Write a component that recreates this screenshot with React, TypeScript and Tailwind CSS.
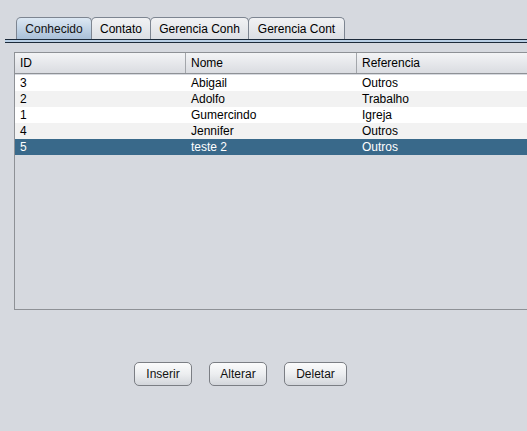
import React from 'react';

const rows = [
  { id: '3', nome: 'Abigail', ref: 'Outros' },
  { id: '2', nome: 'Adolfo', ref: 'Trabalho' },
  { id: '1', nome: 'Gumercindo', ref: 'Igreja' },
  { id: '4', nome: 'Jennifer', ref: 'Outros' },
  { id: '5', nome: 'teste 2', ref: 'Outros' },
];

const tabs = [
  { label: 'Conhecido', w: 'w-[76px]' },
  { label: 'Contato', w: 'w-[60px]' },
  { label: 'Gerencia Conh', w: 'w-[99px]' },
  { label: 'Gerencia Cont', w: 'w-[97px]' },
];

const App: React.FC = () => {
  return (
    <div className="w-[527px] h-[431px] overflow-hidden bg-[#d6d9df] text-[12px] text-black font-['Liberation_Sans',Arial,sans-serif] pt-[17px]">
      {/* Tabs */}
      <div className="flex pl-[16px] h-[22px]">
        {tabs.map((t, i) => (
          <div
            key={t.label}
            className={`${t.w} h-[22px] flex items-center justify-center border border-b-0 border-[#7d8591] rounded-t-[5px] -ml-px first:ml-0 ${
              i === 0
                ? 'bg-gradient-to-b from-[#dde8f3] to-[#a9c0d8] text-[#111]'
                : 'bg-gradient-to-b from-[#f1f2f4] to-[#dcdfe4]'
            }`}
          >
            {t.label}
          </div>
        ))}
      </div>
      {/* Tab strip line */}
      <div className="ml-[5px] h-[4px] border-y border-[#1c2a3a] bg-[#b9cfe5]" />

      {/* Table */}
      <div className="ml-[14px] mt-[9px] w-[520px] h-[258px] border border-r-0 border-[#8e9196] bg-[#d6d9df]">
        <div className="flex h-[21px] bg-gradient-to-b from-[#f3f4f6] to-[#dadce1] border-b border-[#8e9196]">
          <div className="w-[171px] pl-[5px] flex items-center border-r border-[#a3a6ab]">ID</div>
          <div className="w-[171px] pl-[5px] flex items-center border-r border-[#a3a6ab]">Nome</div>
          <div className="flex-1 pl-[5px] flex items-center">Referencia</div>
        </div>
        <div className="pt-px">
          {rows.map((r, i) => {
            const sel = i === rows.length - 1;
            const bg = sel ? 'bg-[#39698a] text-white' : i % 2 === 0 ? 'bg-white' : 'bg-[#f2f2f2]';
            return (
              <div key={r.id} className={`flex h-[16px] leading-[16px] ${bg}`}>
                <div className="w-[171px] pl-[5px]">{r.id}</div>
                <div className="w-[171px] pl-[5px]">{r.nome}</div>
                <div className="flex-1 pl-[5px]">{r.ref}</div>
              </div>
            );
          })}
        </div>
      </div>

      {/* Buttons */}
      <div className="flex gap-[17px] ml-[134px] mt-[52px]">
        {['Inserir', 'Alterar', 'Deletar'].map((b) => (
          <button
            key={b}
            className={`${b === 'Deletar' ? 'w-[63px]' : 'w-[58px]'} h-[24px] rounded-[5px] border border-[#7b7e84] bg-gradient-to-b from-[#fbfbfc] via-[#eceef0] to-[#d3d6db] text-[12px] text-[#111] flex items-center justify-center`}
          >
            {b}
          </button>
        ))}
      </div>
    </div>
  );
};

export default App;
